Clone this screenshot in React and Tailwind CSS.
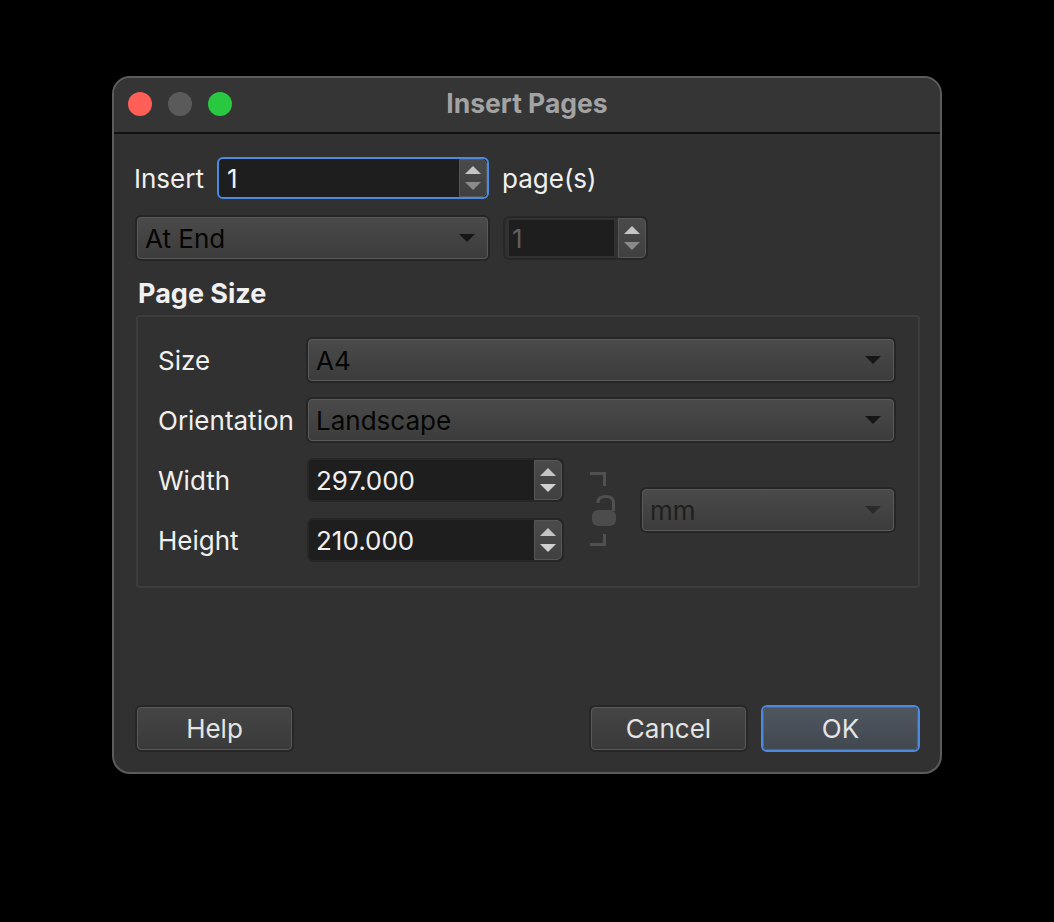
const font = { fontFamily: 'Inter, "Noto Sans", sans-serif' };

const Arrow = ({ up, className }) => (
  <svg width="16" height="8" viewBox="0 0 16 8" className={className}>
    <path d={up ? 'M8 0L16 8H0Z' : 'M0 0H16L8 8Z'} fill="currentColor" />
  </svg>
);

const Stepper = ({ dim }) => (
  <div className="w-[28px] h-full shrink-0 rounded-r-[5px] border border-[#565656] bg-gradient-to-b from-[#4a4a4a] to-[#404040] flex flex-col items-center justify-center gap-[8px]">
    <Arrow up className="text-[#c4c4c4]" />
    <Arrow className={dim ? 'text-[#8a8a8a]' : 'text-[#d0d0d0]'} />
  </div>
);

const Combo = ({ label, className = '', disabled }) => (
  <div className={`h-[46px] rounded-[6px] border-2 border-[#262626] flex ${className}`}>
    <div className="flex-1 rounded-[4px] border border-[#5a5a5a] bg-gradient-to-b from-[#4a4a4a] to-[#3c3c3c] flex items-center justify-between pl-[7px] pr-[12px]">
      <span className={`pt-[2px] ${disabled ? 'text-[#1f1f1f]' : 'text-[#050505]'}`}>{label}</span>
      <svg width="16" height="8" viewBox="0 0 16 8">
        <path d="M0 0H16L8 8Z" fill={disabled ? '#2a2a2a' : '#161616'} />
      </svg>
    </div>
  </div>
);

const Spin = ({ value }) => (
  <div className="w-[257px] h-[44px] rounded-[6px] border-2 border-[#272727] bg-[#1e1e1e] flex items-center">
    <span className="flex-1 pl-[7px] pt-[2px] text-[#f0f0f0]">{value}</span>
    <Stepper />
  </div>
);

const Button = ({ label, primary, className = '' }) => (
  <div className={`w-[159px] h-[47px] rounded-[6px] border-2 flex ${primary ? 'border-[#4a8ae0]' : 'border-[#272727]'} ${className}`}>
    <div className={`flex-1 rounded-[4px] border flex items-center justify-center text-[#e4e4e4] ${primary ? 'border-[#5b6470] bg-gradient-to-b from-[#50565f] to-[#424850]' : 'border-[#585858] bg-gradient-to-b from-[#454545] to-[#3a3a3a]'}`}>
      {label}
    </div>
  </div>
);

const Lock = () => (
  <svg width="28" height="76" viewBox="0 0 28 76" className="shrink-0">
    <path d="M0 1.500H14.500V14" fill="none" stroke="#505050" strokeWidth="3" />
    <path d="M0 72.500H14.500V62" fill="none" stroke="#505050" strokeWidth="3" />
    <path d="M8 31V30C8 26 11.500 24.500 16 24.500C21 24.500 23.500 27 23.500 31V39" fill="none" stroke="#505050" strokeWidth="3" />
    <rect x="2" y="38" width="24" height="16" rx="6" fill="#4c4c4c" />
  </svg>
);

export default function App() {
  return (
    <div className="w-[1054px] h-[922px] bg-black pt-[76px] pl-[112px] text-[26px] leading-none" style={font}>
      <div className="w-[830px] h-[698px] rounded-[18px] border-2 border-[#5c5c5c] bg-[#313131] flex flex-col overflow-hidden">
        <div className="h-[56px] shrink-0 border-b-2 border-[#111] bg-[#353535] flex items-center relative pl-[14px] pb-[2px] gap-[16px]">
          <div className="w-[24px] h-[24px] rounded-full bg-[#ff5f57]" />
          <div className="w-[24px] h-[24px] rounded-full bg-[#5a5a5a]" />
          <div className="w-[24px] h-[24px] rounded-full bg-[#28c840]" />
          <span className="absolute inset-x-0 -translate-y-px text-center font-bold text-[26.5px] text-[#a3a3a3]">Insert Pages</span>
        </div>

        <div className="flex-1 flex flex-col pl-[21px] pr-[20px] pt-[23px] pb-[20px]">
          <div className="flex items-center h-[42px] text-[#f0f0f0]">
            <span className="w-[83px] -ml-[1px] pt-[2px]">Insert</span>
            <div className="w-[272px] h-[42px] rounded-[6px] border-2 border-[#4a8ae0] bg-[#1e1e1e] flex items-center">
              <span className="flex-1 pl-[8px] pt-[2px]">1</span>
              <Stepper dim />
            </div>
            <span className="ml-[13px] pt-[2px]">page(s)</span>
          </div>

          <div className="flex items-center mt-[16px] gap-[13px]">
            <Combo label="At End" className="w-[355px]" />
            <div className="w-[145px] h-[44px] rounded-[6px] border-2 border-[#272727] flex items-center pl-[4px]">
              <div className="flex-1 h-[36px] mr-[4px] bg-[#1e1e1e] flex items-center pl-[3px] pt-[2px] text-[#606060]">1</div>
              <Stepper dim />
            </div>
          </div>

          <div className="mt-[19px] ml-[3px] font-bold text-[27px] text-[#f0f0f0]">Page Size</div>

          <div className="mt-[8px] h-[273px] ml-[1px] rounded-[4px] border-2 border-[#3d3d3d] flex flex-col pl-[20px] pr-[22px] pt-[20px] text-[#f0f0f0]">
            <div className="flex items-center">
              <span className="w-[148px] pt-[2px]">Size</span>
              <Combo label="A4" className="flex-1" />
            </div>
            <div className="flex items-center mt-[14px]">
              <span className="w-[148px] pt-[2px]">Orientation</span>
              <Combo label="Landscape" className="flex-1" />
            </div>
            <div className="flex items-center mt-[15px]">
              <div className="flex flex-col gap-[16px] w-[406px]">
                <div className="flex items-center">
                  <span className="w-[149px] pt-[2px]">Width</span>
                  <Spin value="297.000" />
                </div>
                <div className="flex items-center">
                  <span className="w-[149px] pt-[2px]">Height</span>
                  <Spin value="210.000" />
                </div>
              </div>
              <div className="ml-[26px]"><Lock /></div>
              <Combo label="mm" disabled className="ml-[22px] flex-1" />
            </div>
          </div>

          <div className="mt-auto flex items-center">
            <Button label="Help" />
            <Button label="Cancel" className="ml-auto" />
            <Button label="OK" primary className="ml-[13px]" />
          </div>
        </div>
      </div>
    </div>
  );
}
